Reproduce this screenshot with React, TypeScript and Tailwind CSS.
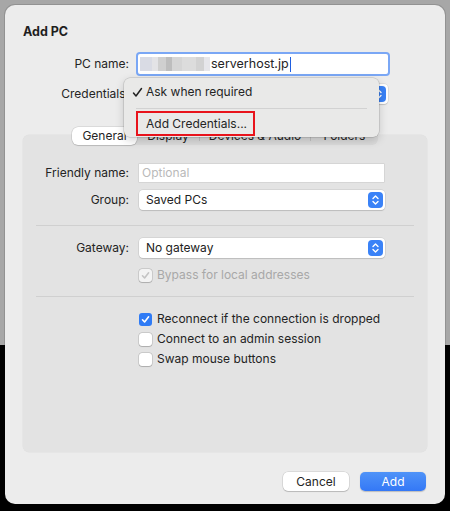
import React from "react";

const font = { fontFamily: "Inter, 'Noto Sans', sans-serif" };

function Stepper() {
  return (
    <div className="w-[15px] h-[16px] rounded-[4px] bg-[#3a82f7] flex items-center justify-center">
      <svg width="9" height="12" viewBox="0 0 9 12" fill="none" stroke="white" strokeWidth="1.4" strokeLinecap="round" strokeLinejoin="round">
        <path d="M2 4.5 L4.5 2 L7 4.5" />
        <path d="M2 7.5 L4.5 10 L7 7.5" />
      </svg>
    </div>
  );
}

function Popup({ text, width }: { text: string; width: string }) {
  return (
    <div className={`${width} h-[20px] bg-white rounded-[4px] shadow-[0_0_0_0.5px_rgba(0,0,0,0.12),0_1px_1px_rgba(0,0,0,0.12)] flex items-center justify-between pl-[7px] pr-[2px]`}>
      <span className="text-[#222]">{text}</span>
      <Stepper />
    </div>
  );
}

function Check({ checked, disabled }: { checked: boolean; disabled?: boolean }) {
  if (checked && !disabled) {
    return (
      <div className="w-[13px] h-[13px] rounded-[3px] bg-[#2f7bf5] flex items-center justify-center">
        <svg width="9" height="9" viewBox="0 0 9 9" fill="none" stroke="white" strokeWidth="1.6" strokeLinecap="round" strokeLinejoin="round">
          <path d="M1.5 4.8 L3.6 7 L7.6 1.8" />
        </svg>
      </div>
    );
  }
  return (
    <div className={`w-[13px] h-[13px] rounded-[3px] ${disabled ? "bg-[#f3f3f3]" : "bg-white"} shadow-[0_0_0_0.5px_rgba(0,0,0,0.2),0_0.5px_1px_rgba(0,0,0,0.15)] flex items-center justify-center`}>
      {checked && (
        <svg width="9" height="9" viewBox="0 0 9 9" fill="none" stroke="#c4c4c4" strokeWidth="1.6" strokeLinecap="round" strokeLinejoin="round">
          <path d="M1.5 4.8 L3.6 7 L7.6 1.8" />
        </svg>
      )}
    </div>
  );
}

export default function App() {
  return (
    <div
      className="w-[450px] h-[511px] overflow-hidden relative bg-[linear-gradient(to_bottom,#a7a7a7_0px,#a7a7a7_345px,#000_345px)] pt-[5px] pl-[5px] text-[12px] text-[#242424] whitespace-nowrap"
      style={font}
    >
      <div className="w-[440px] h-[499px] rounded-[10px] bg-[#ececec] shadow-[0_0_0_1px_rgba(0,0,0,0.12)] pt-[20px] pl-[18px] pr-[18px] flex flex-col">
        <div className="font-bold text-[12.5px] leading-[14px] text-[#1e1e1e]">Add PC</div>

        <div className="mt-[15px] flex flex-col gap-[10px]">
          <div className="flex items-center h-[20px]">
            <div className="w-[106px] text-right">PC name:</div>
            <div className="ml-[9px] w-[250px] h-[20px] bg-white shadow-[0_0_0_2px_#7aa7f5] rounded-[2px] flex items-center pl-[2px]">
              <div className="flex h-[14px]">
                <div className="w-[12px] bg-[#d9dbe4]" />
                <div className="w-[6px] bg-[#e3e3e6]" />
                <div className="w-[8px] bg-[#cfcfcf]" />
                <div className="w-[6px] bg-[#bdbdbd]" />
                <div className="w-[10px] bg-[#d5d5d5]" />
                <div className="w-[14px] bg-[#dcdcdc]" />
                <div className="w-[8px] bg-[#d2d2d2]" />
                <div className="w-[6px] bg-[#e6e6ea]" />
              </div>
              <span className="ml-[1px] text-[12.5px]">serverhost.jp</span>
              <div className="w-[1.5px] h-[15px] bg-[#1f5fe0] ml-[1px]" />
            </div>
          </div>
          <div className="flex items-center h-[20px]">
            <div className="w-[106px] text-right">Credentials:</div>
            <div className="ml-[9px]">
              <Popup text="" width="w-[250px]" />
            </div>
          </div>
        </div>

        <div className="mt-[31px] relative bg-[#e3e3e3] rounded-[6px] h-[317px] shadow-[0_0_0_0.5px_rgba(0,0,0,0.05)]">
          <div className="absolute left-[49px] top-[-8px] h-[18px] w-[306px] rounded-[6px] bg-[#dadada] flex items-center">
            <div className="w-[65px] h-[18px] bg-white rounded-[6px] shadow-[0_0_0_0.5px_rgba(0,0,0,0.15),0_1px_1px_rgba(0,0,0,0.12)] flex items-center justify-center">General</div>
            <div className="w-[62px] text-center">Display</div>
            <div className="w-px h-[10px] bg-[#c2c2c2]" />
            <div className="w-[110px] text-center">Devices &amp; Audio</div>
            <div className="w-px h-[10px] bg-[#c2c2c2]" />
            <div className="flex-1 text-center">Folders</div>
          </div>

          <div className="pt-[29px] flex flex-col">
            <div className="flex items-center h-[18px]">
              <div className="w-[106px] text-right">Friendly name:</div>
              <div className="ml-[10px] w-[245px] h-[18px] bg-white shadow-[0_0_0_0.5px_rgba(0,0,0,0.12)] flex items-center pl-[3px] text-[#b9b9b9]">Optional</div>
            </div>
            <div className="flex items-center h-[20px] mt-[8px]">
              <div className="w-[106px] text-right">Group:</div>
              <div className="ml-[10px]">
                <Popup text="Saved PCs" width="w-[246px]" />
              </div>
            </div>
            <div className="mx-[13px] mt-[15px] h-px bg-[#d0d0d0]" />
            <div className="flex items-center h-[20px] mt-[12px]">
              <div className="w-[106px] text-right">Gateway:</div>
              <div className="ml-[10px]">
                <Popup text="No gateway" width="w-[246px]" />
              </div>
            </div>
            <div className="flex items-center h-[14px] mt-[10px] ml-[116px] gap-[5px] text-[#a8a8a8]">
              <Check checked disabled />
              <span>Bypass for local addresses</span>
            </div>
            <div className="mx-[13px] mt-[14px] h-px bg-[#d0d0d0]" />
            <div className="flex flex-col gap-[6px] mt-[15px] ml-[116px]">
              <div className="flex items-center h-[14px] gap-[5px]">
                <Check checked />
                <span>Reconnect if the connection is dropped</span>
              </div>
              <div className="flex items-center h-[14px] gap-[5px]">
                <Check checked={false} />
                <span>Connect to an admin session</span>
              </div>
              <div className="flex items-center h-[14px] gap-[5px]">
                <Check checked={false} />
                <span>Swap mouse buttons</span>
              </div>
            </div>
          </div>
        </div>

        <div className="mt-[20px] flex justify-end gap-[11px] pr-[1px]">
          <div className="w-[66px] h-[19px] rounded-[5px] bg-white shadow-[0_0_0_0.5px_rgba(0,0,0,0.15),0_1px_1px_rgba(0,0,0,0.15)] flex items-center justify-center">Cancel</div>
          <div className="w-[66px] h-[19px] rounded-[5px] bg-[linear-gradient(to_bottom,#4f93f8,#3478f6)] text-white flex items-center justify-center shadow-[0_0.5px_1px_rgba(0,0,0,0.2)]">Add</div>
        </div>
      </div>

      <div className="absolute left-[124px] top-[78px] w-[255px] h-[59px] rounded-[6px] bg-[#e9e9e8] shadow-[0_0_0_0.5px_rgba(0,0,0,0.18),0_3px_10px_rgba(0,0,0,0.18)] flex flex-col pt-[5px]">
        <div className="flex items-center h-[18px] pl-[8px]">
          <svg width="11" height="11" viewBox="0 0 11 11" fill="none" stroke="#222" strokeWidth="1.5" strokeLinecap="round" strokeLinejoin="round" className="mr-[3px]">
            <path d="M1.5 6 L4 9 L9.5 1.5" />
          </svg>
          <span>Ask when required</span>
        </div>
        <div className="mx-[12px] mt-[7px] h-px bg-[#d2d2d2]" />
        <div className="ml-[12px] mt-[2px] w-[119px] h-[25px] border-2 border-[#e8131b] flex items-center pl-[8px]">
          Add Credentials...
        </div>
      </div>
    </div>
  );
}
